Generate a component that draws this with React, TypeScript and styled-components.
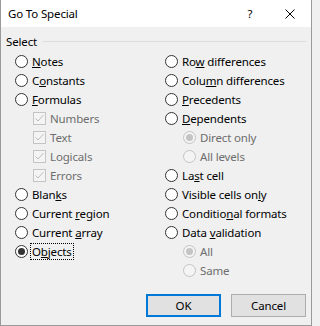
import React from "react";
import styled, { createGlobalStyle } from "styled-components";

const GlobalStyle = createGlobalStyle`
  html, body {
    margin: 0;
    padding: 0;
    background: #f0f0f0;
  }
`;

type Opt = {
  label: string;
  key?: number;
  sub?: boolean;
  kind?: "radio" | "check";
  checked?: boolean;
  disabled?: boolean;
  focus?: boolean;
};

const leftOptions: Opt[] = [
  { label: "Notes", key: 0 },
  { label: "Constants", key: 1 },
  { label: "Formulas", key: 0 },
  { label: "Numbers", sub: true, kind: "check", checked: true, disabled: true },
  { label: "Text", sub: true, kind: "check", checked: true, disabled: true },
  { label: "Logicals", sub: true, kind: "check", checked: true, disabled: true },
  { label: "Errors", sub: true, kind: "check", checked: true, disabled: true },
  { label: "Blanks", key: 4 },
  { label: "Current region", key: 8 },
  { label: "Current array", key: 8 },
  { label: "Objects", key: 1, checked: true, focus: true },
];

const rightOptions: Opt[] = [
  { label: "Row differences", key: 2 },
  { label: "Column differences", key: 4 },
  { label: "Precedents", key: 0 },
  { label: "Dependents", key: 0 },
  { label: "Direct only", sub: true, checked: true, disabled: true },
  { label: "All levels", sub: true, disabled: true },
  { label: "Last cell", key: 2 },
  { label: "Visible cells only", key: 16 },
  { label: "Conditional formats", key: 8 },
  { label: "Data validation", key: 5 },
  { label: "All", sub: true, checked: true, disabled: true },
  { label: "Same", sub: true, disabled: true },
];

const renderLabel = (o: Opt) => {
  if (o.key === undefined) return o.label;
  return (
    <>
      {o.label.slice(0, o.key)}
      <Key>{o.label[o.key]}</Key>
      {o.label.slice(o.key + 1)}
    </>
  );
};

const Option = ({ o }: { o: Opt }) => (
  <Row $sub={!!o.sub}>
    {o.kind === "check" ? (
      <Check $disabled={!!o.disabled}>
        {o.checked && (
          <svg width="11" height="11" viewBox="0 0 11 11">
            <polyline
              points="1.5,5.5 4,8 9.5,2"
              fill="none"
              stroke={o.disabled ? "#bcbcbc" : "#333"}
              strokeWidth="1"
            />
          </svg>
        )}
      </Check>
    ) : (
      <Radio $disabled={!!o.disabled}>
        {o.checked && <Dot $disabled={!!o.disabled} />}
      </Radio>
    )}
    <Label $disabled={!!o.disabled} $focus={!!o.focus}>
      {renderLabel(o)}
    </Label>
  </Row>
);

export default function App() {
  return (
    <>
      <GlobalStyle />
      <Window>
        <TitleBar>
          <Title>Go To Special</Title>
          <TitleButton>?</TitleButton>
          <TitleButton>
            <svg width="10" height="10" viewBox="0 0 10 10">
              <path d="M0.5 0.5 L9.5 9.5 M9.5 0.5 L0.5 9.5" stroke="#000" strokeWidth="1" />
            </svg>
          </TitleButton>
        </TitleBar>
        <Body>
          <GroupHeader>
            <Legend>Select</Legend>
            <Rule />
          </GroupHeader>
          <Columns>
            <Column>
              {leftOptions.map((o) => (
                <Option key={o.label} o={o} />
              ))}
            </Column>
            <Column>
              {rightOptions.map((o) => (
                <Option key={o.label} o={o} />
              ))}
            </Column>
          </Columns>
          <Footer>
            <Button $primary>OK</Button>
            <Button>Cancel</Button>
          </Footer>
        </Body>
      </Window>
    </>
  );
}

const Window = styled.div`
  width: 312px;
  height: 326px;
  box-sizing: border-box;
  border: 1px solid #9a9a9a;
  border-top: none;
  background: #f0f0f0;
  display: flex;
  flex-direction: column;
  font-family: "Segoe UI", "Noto Sans", sans-serif;
  font-size: 11.5px;
  letter-spacing: -0.15px;
  color: #000;
`;

const TitleBar = styled.div`
  height: 27px;
  background: #fff;
  display: flex;
  align-items: center;
  padding-left: 7px;
  padding-right: 1px;
`;

const Title = styled.div`
  flex: 1;
`;

const TitleButton = styled.div`
  width: 40px;
  height: 27px;
  display: flex;
  align-items: center;
  justify-content: center;
`;

const Body = styled.div`
  flex: 1;
  display: flex;
  flex-direction: column;
  padding: 0 5px 8px 5px;
`;

const GroupHeader = styled.div`
  display: flex;
  align-items: center;
  height: 15px;
  margin-top: 7px;
`;

const Legend = styled.span`
  line-height: 15px;
`;

const Rule = styled.div`
  flex: 1;
  height: 1px;
  background: #dcdcdc;
  margin-left: 6px;
`;

const Columns = styled.div`
  display: grid;
  grid-template-columns: 150px 1fr;
  padding-left: 9px;
  margin-top: 3px;
`;

const Column = styled.div`
  display: flex;
  flex-direction: column;
`;

const Row = styled.div<{ $sub: boolean }>`
  height: 19px;
  display: flex;
  align-items: center;
  gap: 4px;
  padding-left: ${(p) => (p.$sub ? 18 : 0)}px;
`;

const Radio = styled.span<{ $disabled: boolean }>`
  width: 13px;
  height: 13px;
  box-sizing: border-box;
  border-radius: 50%;
  border: 1px solid ${(p) => (p.$disabled ? "#c4c4c4" : "#333")};
  background: ${(p) => (p.$disabled ? "#f4f4f4" : "#fff")};
  display: flex;
  align-items: center;
  justify-content: center;
  flex-shrink: 0;
`;

const Dot = styled.span<{ $disabled: boolean }>`
  width: 7px;
  height: 7px;
  border-radius: 50%;
  background: ${(p) => (p.$disabled ? "#c4c4c4" : "#333")};
`;

const Check = styled.span<{ $disabled: boolean }>`
  width: 13px;
  height: 13px;
  box-sizing: border-box;
  border: 1px solid ${(p) => (p.$disabled ? "#c4c4c4" : "#333")};
  background: ${(p) => (p.$disabled ? "#f4f4f4" : "#fff")};
  display: flex;
  align-items: center;
  justify-content: center;
  flex-shrink: 0;
`;

const Label = styled.span<{ $disabled: boolean; $focus: boolean }>`
  color: ${(p) => (p.$disabled ? "#6d6d6d" : "#000")};
  white-space: nowrap;
  line-height: 15px;
  ${(p) =>
    p.$focus &&
    `
    outline: 1px dotted #000;
    outline-offset: 0;
    padding: 0 1px;
    margin-left: -1px;
  `}
`;

const Key = styled.u`
  text-decoration-thickness: 1px;
  text-underline-offset: 1px;
`;

const Footer = styled.div`
  margin-top: auto;
  display: flex;
  justify-content: flex-end;
  gap: 10px;
`;

const Button = styled.button<{ $primary?: boolean }>`
  width: 75px;
  height: 23px;
  box-sizing: border-box;
  padding: 0;
  background: #e1e1e1;
  border: ${(p) => (p.$primary ? "2px solid #0078d7" : "1px solid #adadad")};
  font-family: "Segoe UI", "Noto Sans", sans-serif;
  font-size: 11.5px;
  letter-spacing: -0.15px;
  color: #000;
`;
